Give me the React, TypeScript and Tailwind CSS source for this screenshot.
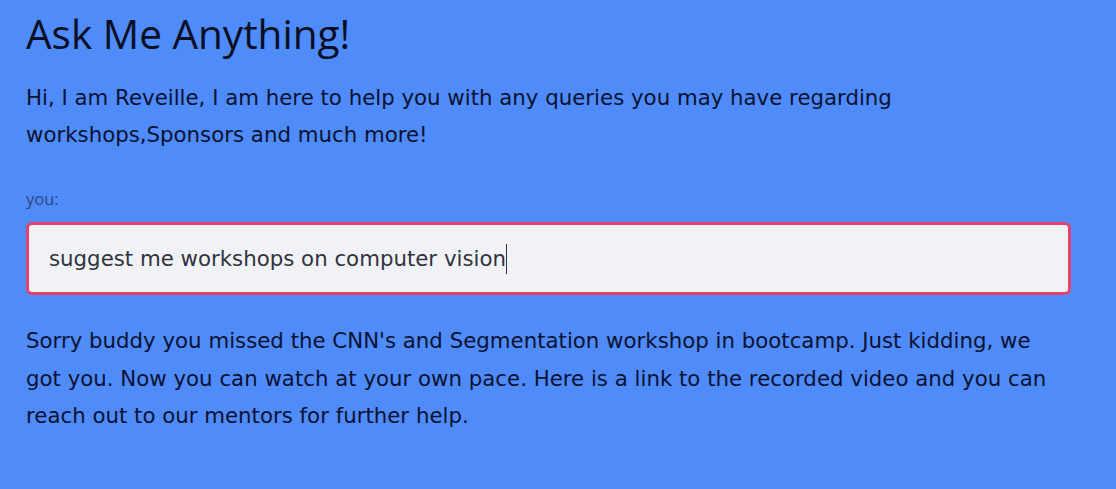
export default function App() {
  return (
    <div className="min-h-screen w-full bg-[#4f8bf9] text-[#0b1233]" style={{ minHeight: 489 }}>
      <div className="w-[1045px] ml-[26px] pt-[8px]" style={{ fontFamily: '"DejaVu Sans", sans-serif' }}>
        <h1 className="text-[40.5px] leading-[52px] font-normal text-[#0a0f24]" style={{ fontFamily: '"Open Sans", sans-serif' }}>Ask Me Anything!</h1>
        <p className="mt-[20px] text-[21.3px] leading-[36.5px]">
          Hi, I am Reveille, I am here to help you with any queries you may have regarding workshops,Sponsors and much more!
        </p>
        <div className="mt-[36px] text-[16.5px] leading-[20px] text-[#2c4780]" style={{ fontFamily: '"Open Sans", sans-serif' }}>you:</div>
        <div className="mt-[13px] h-[73px] rounded-[6px] border-[3px] border-[#e5416f] bg-[#f0f2f6] flex items-center pl-[20px]">
          <span className="text-[21.3px] text-[#31333f]">suggest me workshops on computer vision</span>
          <span className="inline-block w-px h-[30px] bg-[#31333f]" />
        </div>
        <p className="mt-[27px] text-[21.3px] leading-[37.5px]">
          Sorry buddy you missed the CNN's and Segmentation workshop in bootcamp. Just kidding, we got you. Now you can watch at your own pace. Here is a link to the recorded video and you can reach out to our mentors for further help.
        </p>
      </div>
    </div>
  );
}
